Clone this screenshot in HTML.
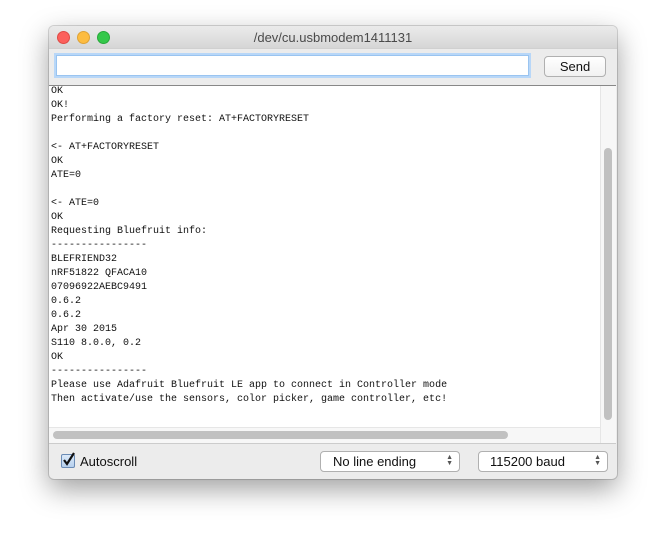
<!DOCTYPE html>
<html><head><style>
body{margin:0;width:665px;height:552px;background:#fff;position:relative;overflow:hidden;font-family:"Liberation Sans",sans-serif}
.win{position:absolute;left:49px;top:26px;width:568px;height:453px;background:#ececec;border-radius:5px;box-shadow:0 10px 28px rgba(0,0,0,.38),0 0 0 1px rgba(0,0,0,.15);overflow:hidden}
.title{position:absolute;left:0;top:0;width:568px;height:22px;background:linear-gradient(#ebebeb,#d6d6d6);text-align:center;font-size:13px;line-height:23px;color:#4a4a4a}
.dot{position:absolute;top:5px;width:12px;height:12px;border-radius:50%}
.tb{position:absolute;left:0;top:22px;width:568px;height:37px;background:#ececec;border-top:1px solid #d0d0d0}
.inp{position:absolute;left:7px;top:6px;width:471px;height:19px;background:#fff;border:1px solid #9ac4f0;box-shadow:0 0 0 2px #b8d7f8}
.send{position:absolute;left:495px;top:7px;width:60px;height:19px;border:1px solid #b0b0b0;border-radius:4px;background:linear-gradient(#fff,#f1f1f1);font-size:13px;text-align:center;line-height:19px;color:#111}
.ta{position:absolute;left:0;top:59px;width:567px;height:357px;background:#fff;border-top:1px solid #888;border-bottom:1px solid #ccc;overflow:hidden}
pre{margin:0;position:absolute;left:2px;top:-1px;font-family:"Liberation Mono",monospace;font-size:10px;line-height:14px;color:#111}
.vs{position:absolute;left:551px;top:0;width:16px;height:357px;background:#f7f7f7;border-left:1px solid #e6e6e6}
.vt{position:absolute;left:555px;top:62px;width:8px;height:272px;background:#c1c1c1;border-radius:4px}
.hs{position:absolute;left:0;top:341px;width:551px;height:16px;background:#f7f7f7;border-top:1px solid #e6e6e6}
.ht{position:absolute;left:4px;top:345px;width:455px;height:8px;background:#c1c1c1;border-radius:4px}
.bb{position:absolute;left:0;top:417px;width:568px;height:36px}
.cb{position:absolute;left:12px;top:11px;width:12px;height:12px;border:1px solid #6a8bb5;border-radius:2px;background:linear-gradient(#dbe9f9,#b6d0ee)}
.sel{position:absolute;top:8px;height:19px;border:1px solid #b0b0b0;border-radius:4px;background:#fff;font-size:13px;line-height:19px;color:#111}
.ar{position:absolute;right:6px;top:3px;font-size:7px;line-height:6px;color:#555}
</style></head><body>
<div class="win">
<div class="title">/dev/cu.usbmodem1411131
<div class="dot" style="left:8px;background:#fc605c;border:1px solid #de4a45;width:11px;height:11px"></div>
<div class="dot" style="left:28px;background:#fdbc40;border:1px solid #dea236;width:11px;height:11px"></div>
<div class="dot" style="left:48px;background:#34c84a;border:1px solid #28a83a;width:11px;height:11px"></div>
</div>
<div class="tb"><div class="inp"></div><div class="send">Send</div></div>
<div class="ta"><pre>OK
OK!
Performing a factory reset: AT+FACTORYRESET

&lt;- AT+FACTORYRESET
OK
ATE=0

&lt;- ATE=0
OK
Requesting Bluefruit info:
----------------
BLEFRIEND32
nRF51822 QFACA10
07096922AEBC9491
0.6.2
0.6.2
Apr 30 2015
S110 8.0.0, 0.2
OK
----------------
Please use Adafruit Bluefruit LE app to connect in Controller mode
Then activate/use the sensors, color picker, game controller, etc!</pre>
<div class="vs"></div><div class="vt"></div><div class="hs"></div><div class="ht"></div></div>
<div class="bb">
<div class="cb"><svg width="14" height="14" style="position:absolute;left:0;top:-3px"><path d="M2 8 L5 12 L12 1" stroke="#111" stroke-width="2.2" fill="none"/></svg></div>
<div style="position:absolute;left:31px;top:11px;font-size:13px;color:#111">Autoscroll</div>
<div class="sel" style="left:271px;width:138px"><span style="margin-left:12px">No line ending</span><div class="ar">▲<br>▼</div></div>
<div class="sel" style="left:429px;width:128px"><span style="margin-left:11px">115200 baud</span><div class="ar">▲<br>▼</div></div>
</div>
</div>
</body></html>
